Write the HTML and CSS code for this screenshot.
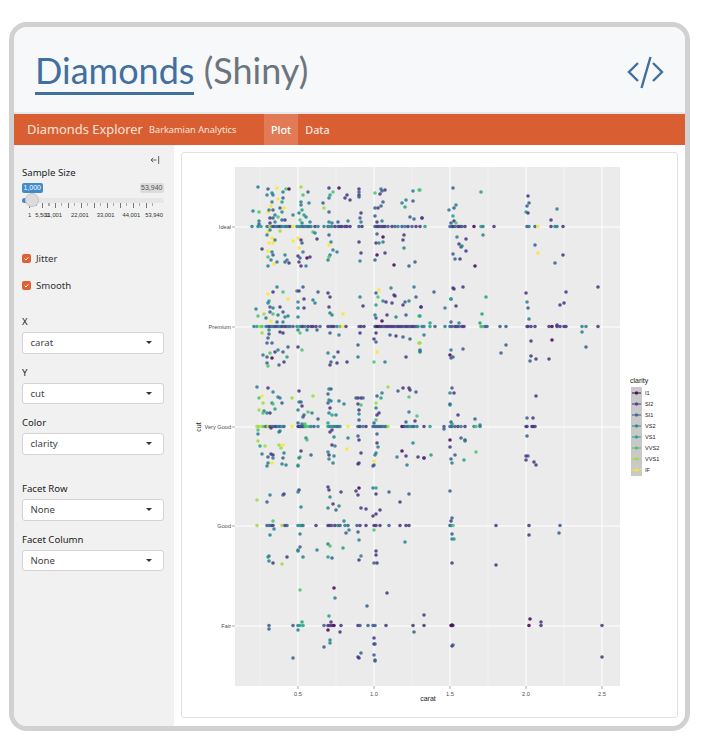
FILE: index.html
```html
<!DOCTYPE html>
<html lang="en">
<head>
<meta charset="utf-8">
<title>Diamonds (Shiny)</title>
<link rel="stylesheet" href="styles.css">
</head>
<body>

<div class="frame">
	<header class="top">
		<h1 class="title"><a href="#">Diamonds</a> <span>(Shiny)</span></h1>
		<svg class="code-icon" width="37" height="34" viewBox="627 55 37 34">
			<path d="M638 63 L629 72 L638 81 M653 63 L662 72 L653 81 M650.5 57 L641.5 88"/>
		</svg>
	</header>

	<nav class="navbar">
		<span class="brand">Diamonds Explorer</span>
		<span class="brand-sub">Barkamian Analytics</span>
		<a class="tab active" href="#">Plot</a>
		<a class="tab" href="#">Data</a>
	</nav>

	<div class="body">
		<aside class="sidebar">
			<div class="collapse">
				<svg width="10" height="10" viewBox="0 0 10 10">
					<path d="M6.5 5 H1 M3.2 2.8 L1 5 L3.2 7.2 M8.7 1 V9"/>
				</svg>
			</div>

			<label class="field-label">Sample Size</label>
			<div class="slider">
				<div class="slider-ends"><span class="from">1,000</span><span class="to">53,940</span></div>
				<div class="track"><i class="bar"></i><i class="handle"></i></div>
				<div class="ticks"></div>
				<div class="tick-labels">
					<span class="n1">1</span>
					<span class="n2">5,501</span>
					<span class="n3">11,001</span>
					<span class="n4">22,001</span>
					<span>33,001</span>
					<span>44,001</span>
					<span class="n7">53,940</span>
				</div>
			</div>

			<div class="check first"><i class="box"><svg width="9" height="9" viewBox="0 0 9 9"><path d="M2.6 4.6 L4 6 L6.5 3.2"/></svg></i>Jitter</div>
			<div class="check"><i class="box"><svg width="9" height="9" viewBox="0 0 9 9"><path d="M2.6 4.6 L4 6 L6.5 3.2"/></svg></i>Smooth</div>

			<div class="group gap-x">
				<label class="field-label">X</label>
				<div class="select">carat</div>
			</div>
			<div class="group">
				<label class="field-label">Y</label>
				<div class="select">cut</div>
			</div>
			<div class="group">
				<label class="field-label">Color</label>
				<div class="select">clarity</div>
			</div>
			<div class="group gap-facet">
				<label class="field-label">Facet Row</label>
				<div class="select">None</div>
			</div>
			<div class="group">
				<label class="field-label">Facet Column</label>
				<div class="select">None</div>
			</div>
		</aside>

		<main class="main">
			<div class="card">
				<!-- viewBox is in window pixels, easier to read the dots off the picture -->
				<svg id="plot" width="495" height="564" viewBox="182 153 495 564">
					<rect class="panel" x="235" y="167" width="385" height="519"/>
					<g id="grid"></g>
					<g id="dots"></g>

					<text class="tick-y" x="231" y="229">Ideal</text>
					<text class="tick-y" x="231" y="329">Premium</text>
					<text class="tick-y" x="231" y="429">Very Good</text>
					<text class="tick-y" x="231" y="528">Good</text>
					<text class="tick-y" x="231" y="628">Fair</text>
					<text class="axis-title" transform="translate(201 427) rotate(-90)">cut</text>

					<text class="tick-x" x="298" y="696">0.5</text>
					<text class="tick-x" x="374" y="696">1.0</text>
					<text class="tick-x" x="450" y="696">1.5</text>
					<text class="tick-x" x="526" y="696">2.0</text>
					<text class="tick-x" x="602" y="696">2.5</text>
					<text class="axis-title" x="428" y="701">carat</text>

					<text class="legend-title" x="630" y="383">clarity</text>
					<rect class="legend-keys" x="631" y="387" width="11" height="89"/>
					<g id="legend"></g>
					<text class="legend-text" x="645" y="395">I1</text>
					<text class="legend-text" x="645" y="406">SI2</text>
					<text class="legend-text" x="645" y="417">SI1</text>
					<text class="legend-text" x="645" y="428">VS2</text>
					<text class="legend-text" x="645" y="439">VS1</text>
					<text class="legend-text" x="645" y="450">VVS2</text>
					<text class="legend-text" x="645" y="461">VVS1</text>
					<text class="legend-text" x="645" y="472">IF</text>
				</svg>
			</div>
		</main>
	</div>
</div>

<script src="plot.js"></script>
</body>
</html>
```

FILE: styles.css
```css
html, body {
	margin: 0;
	padding: 0;
	background: #fff;
}

body {
	font-family: "Noto Sans", "Open Sans", sans-serif;
	color: #333;
}

a { text-decoration: none; }

.frame {
	box-sizing: border-box;
	width: 681px;
	height: 709px;
	margin: 22px 0 0 9px;
	border: 5px solid #d1d1d1;
	border-radius: 18px;
	overflow: hidden;
	display: flex;
	flex-direction: column;
	background: #fff;
}

/* top title band */
.top {
	flex: none;
	box-sizing: border-box;
	height: 87px;
	padding: 0 21px 0 21px;
	display: flex;
	align-items: flex-start;
	justify-content: space-between;
	background: #f7f8fa;
	border-bottom: 2px solid #e6e8eb;
}

.title {
	margin: 21px 0 0 0;
	font-family: Lato, sans-serif;
	font-size: 36px;
	font-weight: 400;
	line-height: 44px;
	color: #6c757d;
}

.title a {
	display: inline-block;
	color: #41709f;
	border-bottom: 3px solid #41709f;
}

.code-icon {
	margin-top: 28px;
}

.code-icon path {
	fill: none;
	stroke: #41709f;
	stroke-width: 2.4;
}

/* orange nav */
.navbar {
	flex: none;
	box-sizing: border-box;
	height: 31px;
	padding-left: 13px;
	display: flex;
	align-items: center;
	background: #d95f33;
	color: #f7e3db;
}

.brand {
	font-size: 12.9px;
	width: 122px;
	margin-bottom: 2px;
}

.brand-sub {
	font-size: 9.2px;
	width: 115px;
}

.tab {
	align-self: stretch;
	display: flex;
	align-items: center;
	padding: 0 7px 1px;
	font-size: 10.8px;
	font-weight: 500;
	color: #f7e3db;
}

.tab.active {
	background: #e17a55;
	color: #fff;
}

.body {
	flex: 1;
	display: flex;
	min-height: 0;
}

/* sidebar */
.sidebar {
	flex: none;
	box-sizing: border-box;
	width: 160px;
	padding: 10px 10px 0 8px;
	background: #f1f1f1;
	font-size: 9.6px;
}

.collapse {
	height: 10px;
	padding-right: 4px;
	display: flex;
	justify-content: flex-end;
}

.collapse path {
	fill: none;
	stroke: #555;
	stroke-width: 0.9;
}

.field-label {
	display: block;
	height: 14px;
	line-height: 14px;
	color: #222;
}

.sidebar > .field-label {
	margin-top: 1px;
}

.slider {
	margin-top: 3px;
	overflow: hidden;
	padding-top: 5px;
	margin-top: -2px;
}

.slider-ends {
	display: flex;
	justify-content: space-between;
	height: 10px;
	font-family: "Liberation Sans", sans-serif;
	font-size: 7px;
	line-height: 10px;
}

.slider-ends span {
	padding: 0 1.5px;
	border-radius: 2px;
}

.from {
	background: #428bca;
	color: #fff;
}

.to {
	background: #dcdcdc;
	color: #555;
}

.track {
	position: relative;
	height: 5px;
	margin-top: 5px;
	background: #e6e6e6;
	border-radius: 3px;
}

.bar {
	position: absolute;
	left: 0;
	top: 0;
	width: 10px;
	height: 5px;
	background: #428bca;
	border-radius: 3px 0 0 3px;
}

.handle {
	position: absolute;
	left: 3px;
	top: -5px;
	width: 14px;
	height: 14px;
	box-sizing: border-box;
	border: 1px solid #c4c4c4;
	border-radius: 50%;
	background: #dcdcdc;
}

.ticks {
	height: 5px;
	margin: 0 6px 0 7px;
	background-image:
		repeating-linear-gradient(90deg, #777 0 1px, transparent 1px 13px),
		repeating-linear-gradient(90deg, #aaa 0 1px, transparent 1px 6.5px);
	background-size: 100% 5px, 100% 3px;
	background-repeat: no-repeat;
}

.tick-labels {
	display: flex;
	margin-top: 3px;
	height: 9px;
	font-family: "Liberation Sans", sans-serif;
	font-size: 5.8px;
	line-height: 9px;
	color: #333;
	white-space: nowrap;
}

.tick-labels span {
	flex: none;
	margin-left: 8px;
}

.tick-labels .n1 { margin-left: 6px; }
.tick-labels .n2 { margin-left: 4px; }
.tick-labels .n3 { margin-left: -5px; }
.tick-labels .n4 { margin-left: 9px; }
.tick-labels .n7 { margin-left: 5px; }

.check {
	display: flex;
	align-items: center;
	height: 14px;
	margin-top: 13px;
	color: #333;
}

.check.first {
	margin-top: 31px;
}

.box {
	display: block;
	width: 9px;
	height: 9px;
	margin-right: 5px;
	border-radius: 2px;
	background: #e06234;
}

.box svg { display: block; }

.box path {
	fill: none;
	stroke: #fff;
	stroke-width: 1;
}

.group {
	margin-top: 12px;
}

.group.gap-x { margin-top: 23px; }
.group.gap-facet { margin-top: 27.5px; }

.group .field-label {
	margin-bottom: 3px;
}

.select {
	position: relative;
	box-sizing: border-box;
	height: 21.5px;
	padding-left: 7.5px;
	background: #fff;
	border: 1px solid #d4d4d4;
	border-radius: 3px;
	font-size: 9.6px;
	line-height: 19.5px;
	color: #444;
}

.select::after {
	content: "";
	position: absolute;
	right: 11px;
	top: 8px;
	border: 3px solid transparent;
	border-top: 3.5px solid #333;
	border-bottom: 0;
}

/* plot area */
.main {
	flex: 1;
	box-sizing: border-box;
	padding: 7px 7px 8px 7px;
	background: #fff;
}

.card {
	box-sizing: border-box;
	height: 100%;
	border: 1px solid #e2e2e2;
	border-radius: 3px;
	overflow: hidden;
}

#plot {
	display: block;
	font-family: "Liberation Sans", sans-serif;
}

.panel { fill: #ebebeb; }

.tick-y {
	font-size: 5.6px;
	fill: #4d4d4d;
	text-anchor: end;
}

.tick-x {
	font-size: 5.6px;
	fill: #4d4d4d;
	text-anchor: middle;
}

.axis-title {
	font-size: 7px;
	fill: #222;
	text-anchor: middle;
}

.legend-title {
	font-size: 7px;
	fill: #222;
}

.legend-text {
	font-size: 5.6px;
	fill: #222;
}

.legend-keys { fill: #c9c9c9; }
```

FILE: plot.js
```js
var NS = "http://www.w3.org/2000/svg";
var COLORS = ["#440154", "#46337e", "#365c8d", "#277f8e", "#1fa187", "#4ac16d", "#a0da39", "#fde725"];

function el(parent, name, attrs) {
	var node = document.createElementNS(NS, name);
	for (var k in attrs) node.setAttribute(k, attrs[k]);
	parent.appendChild(node);
	return node;
}

/* dots sitting on the row line, "x/colour" */
var rows = {
	227: "252/3 258/3 261/4 267/3 269/2 270/7 272/3 274/1 276/3 278/2 280/1 282/3 284/4 286/2 288/3 290/1 293/7 297/3 299/4 301/3 303/2 305/3 307/3 309/2 311/3 315/1 318/3 324/3 328/2 330/4 332/3 335/1 338/2 340/1 342/1 345/1 347/1 350/1 359/2 362/1 375/2 377/1 379/1 381/2 383/1 385/1 388/2 392/1 395/2 398/3 402/2 405/3 408/1 412/2 416/1 420/1 425/4 450/2 452/3 453/1 455/2 458/1 460/1 462/2 465/1 474/0 481/4 483/3 494/1 527/2 529/3 535/2 538/7 551/1 555/3 557/3 563/1",
	327: "254/3 257/4 260/6 262/5 266/3 268/2 270/1 272/3 274/2 276/1 278/2 280/3 282/1 284/2 286/1 288/3 290/2 293/2 297/3 299/5 301/2 303/1 305/3 308/1 311/1 313/1 316/1 320/2 328/1 330/2 332/1 334/1 337/3 340/5 343/7 346/1 359/2 361/1 364/1 375/3 376/1 378/0 380/1 382/1 384/2 386/1 388/1 390/1 392/1 394/1 396/2 398/1 400/1 402/1 404/2 406/1 408/1 410/2 412/1 414/1 416/2 418/3 422/3 424/3 430/4 435/2 445/3 450/2 452/2 455/1 457/1 459/2 462/1 464/1 481/5 482/5 485/2 487/2 500/2 506/2 527/2 528/1 531/1 535/1 549/1 552/0 557/1 560/1 564/1 566/1 582/3 586/3 598/1",
	427: "257/6 259/6 262/6 264/5 266/3 267/2 268/7 270/1 272/3 274/2 276/1 278/3 280/2 282/4 284/2 292/7 298/2 299/1 300/1 301/3 302/1 303/2 304/1 305/5 307/5 309/5 311/3 314/2 318/3 328/4 330/3 332/4 334/3 336/3 338/2 340/3 348/7 358/2 360/1 363/3 366/1 373/2 375/2 376/3 378/2 380/2 382/2 384/3 386/2 388/6 402/0 404/1 406/3 408/2 410/4 412/3 414/2 417/3 424/1 430/4 444/2 450/2 452/2 455/2 458/1 461/3 465/1 474/3 476/5 480/3 526/2 527/1 532/1 533/1 535/1",
	526: "257/6 267/2 269/3 271/2 273/1 282/6 285/1 287/2 298/3 300/4 302/3 303/3 316/1 328/1 330/1 332/2 335/1 338/3 340/2 345/3 348/2 357/2 360/1 366/1 374/1 376/1 380/1 389/2 400/1 406/1 409/1 450/2 451/3 453/5 496/1 529/1 560/2",
	626: "269/2 293/2 298/3 300/4 303/4 324/2 328/1 330/1 332/1 334/0 341/1 358/1 360/2 368/2 373/2 375/2 386/1 413/1 424/1 451/0 452/1 453/2 529/0 541/1 602/1"
};

/* everything the jitter pushed off the line, "x/y/colour" */
var jitter = "258/187/3 277/188/7 268/189/2 286/189/5 283/192/3 289/189/0 301/187/6 308/192/2 303/195/5 272/193/3 273/195/3 267/195/3 278/199/7 282/202/4 272/202/3 283/198/2 309/203/3 301/202/3 329/188/1 339/188/0 333/192/5 330/195/4 329/198/3 323/203/2 350/200/1 347/195/1 345/198/1 359/189/1 359/192/2 359/195/1 359/197/2 375/193/5 381/189/3 382/191/2 385/190/1 380/194/1 383/202/2 381/206/2 378/208/1 375/208/2 413/191/3 419/190/5 413/201/2 406/200/3 402/203/3 405/207/4 " +
	"253/211/3 259/212/5 268/212/7 271/206/7 269/210/3 273/210/2 280/208/2 284/208/7 282/212/3 275/215/3 278/217/5 270/218/1 273/218/2 259/221/3 259/224/2 270/223/1 275/222/3 282/220/2 285/220/1 293/215/3 301/205/3 302/210/4 299/213/3 304/215/4 300/220/5 302/223/3 306/217/3 310/222/3 324/208/6 329/212/2 329/222/3 332/223/3 338/222/2 348/221/3 361/213/1 360/218/2 361/222/3 375/216/2 377/222/1 382/221/3 410/217/2 414/219/2 422/218/3 " +
	"453/188/2 481/192/4 528/196/1 529/203/2 527/206/2 557/209/3 526/212/4 528/213/1 456/205/3 449/210/3 454/208/2 453/216/4 551/220/1 422/218/1 454/221/1 456/223/5 451/223/2 420/190/5 " +
	"268/232/7 270/230/3 267/235/3 272/238/7 269/243/7 273/243/7 275/240/3 280/231/6 293/241/7 262/249/1 268/251/7 272/252/3 273/255/2 268/257/5 271/260/3 268/266/3 274/264/7 277/262/3 285/255/3 287/260/3 289/263/1 285/262/2 298/238/7 301/240/1 302/243/2 299/248/7 303/252/3 310/257/1 298/256/1 300/258/2 299/262/1 301/266/1 306/266/3 307/258/0 313/232/5 317/239/1 315/233/3 329/235/2 331/242/3 329/245/7 333/250/3 330/255/3 328/260/3 329/257/5 337/252/3 359/242/1 361/253/1 360/261/3 377/234/2 376/243/1 379/243/3 383/237/0 385/253/1 377/255/0 375/260/2 383/242/3 394/265/0 403/240/1 404/235/1 404/248/3 409/266/2 415/262/2 " +
	"457/237/3 483/235/3 466/239/1 459/244/1 461/247/2 462/246/3 466/251/1 453/254/2 455/259/2 460/259/1 475/266/0 535/245/2 538/253/7 563/255/1 555/263/2 " +
	"277/287/3 283/292/5 288/299/7 297/291/3 303/287/2 299/291/1 268/294/7 273/292/1 304/299/1 313/300/3 318/292/2 328/293/1 330/297/1 315/303/3 269/301/4 268/303/3 270/307/2 273/308/3 280/307/1 270/312/2 273/314/5 278/315/3 283/312/2 285/317/3 288/316/3 264/314/6 258/316/5 256/309/3 298/302/3 298/308/3 298/317/3 304/308/1 329/307/1 330/313/3 332/315/3 343/314/7 271/321/7 277/322/2 283/322/3 266/318/3 " +
	"360/297/3 363/306/1 376/293/2 379/290/7 378/297/5 391/288/3 394/295/1 376/305/4 375/315/3 376/318/2 382/321/0 387/315/1 396/317/3 403/305/1 405/302/2 409/301/3 414/287/3 416/297/2 421/307/1 419/316/5 406/315/2 395/296/1 383/301/3 386/302/1 392/303/1 " +
	"434/292/2 453/288/1 454/289/1 463/287/1 451/299/3 451/299/4 486/297/4 421/307/1 445/308/3 456/306/1 420/316/4 482/314/4 430/323/4 451/322/2 459/323/3 480/323/4 526/293/1 527/302/3 528/308/2 529/319/3 566/292/1 598/287/1 564/303/1 560/305/1 557/325/1 " +
	"262/333/6 269/330/3 269/334/2 268/338/2 272/343/2 267/343/2 263/355/3 267/357/2 270/353/5 272/358/0 275/352/1 278/350/3 283/352/2 288/347/2 287/357/4 280/332/1 283/333/1 300/333/5 298/330/3 307/330/3 317/330/2 302/350/5 298/347/1 330/333/2 328/353/3 334/357/3 338/352/1 339/335/3 358/345/2 360/333/1 358/357/3 376/333/1 374/339/1 376/342/2 377/352/7 390/335/2 396/336/1 403/337/2 410/339/2 419/343/6 420/350/3 420/352/3 406/357/1 " +
	"424/335/3 582/332/3 586/347/2 531/341/1 552/340/0 506/345/2 501/353/2 463/349/2 451/350/3 450/355/0 453/357/2 451/358/2 420/351/3 420/343/6 531/356/1 536/359/1 549/359/1 " +
	"267/363/2 268/366/5 279/365/2 284/362/1 330/365/1 337/363/1 331/362/2 347/362/1 374/362/5 385/362/3 530/361/2 " +
	"257/387/3 268/388/1 262/396/7 259/398/5 273/392/3 278/397/3 280/398/3 272/403/3 273/404/5 282/403/2 292/398/6 263/403/6 259/410/6 264/411/3 263/413/5 267/413/3 275/409/4 270/413/1 299/391/1 313/396/6 299/402/3 301/402/2 302/406/1 298/410/3 308/412/5 312/413/3 304/415/2 303/417/2 318/419/2 298/423/2 305/424/5 302/424/3 329/389/3 331/389/2 328/394/2 329/400/3 331/401/3 328/403/2 330/408/1 329/413/3 332/415/4 336/415/3 339/401/3 344/404/3 328/423/4 " +
	"358/398/1 361/398/1 363/398/2 356/398/2 358/404/1 361/405/5 359/410/1 359/414/3 359/420/2 377/396/2 382/393/3 381/398/4 388/387/6 376/403/6 376/408/3 379/413/1 377/415/1 376/420/5 374/423/2 398/391/2 403/388/1 409/388/1 410/390/1 416/392/2 409/397/5 409/412/3 417/416/5 406/422/2 415/421/1 " +
	"452/388/2 450/393/3 454/393/1 450/404/2 450/405/3 458/415/1 475/419/2 451/422/2 452/424/4 536/396/1 533/418/1 527/418/2 " +
	"258/430/5 258/434/3 271/428/1 280/431/3 279/432/3 258/441/6 260/446/4 265/446/6 279/445/6 283/445/7 281/448/6 284/453/3 283/458/2 262/454/3 268/457/2 271/454/1 273/455/1 273/458/3 272/463/7 268/463/3 267/466/3 282/464/3 286/465/3 306/438/3 307/440/5 301/451/1 300/457/5 299/458/3 311/455/2 298/465/5 298/466/3 330/432/1 332/430/1 334/437/3 332/445/1 335/446/3 348/438/3 347/449/7 328/452/3 329/455/1 334/456/3 329/459/3 333/463/3 " +
	"358/436/2 359/440/1 361/453/1 359/463/1 358/464/1 377/434/2 377/443/1 378/447/3 376/453/3 375/455/3 374/461/7 374/465/2 373/466/2 397/457/3 406/456/1 413/443/3 402/451/0 418/457/1 424/458/1 407/465/3 431/455/4 " +
	"444/429/2 480/425/3 461/438/2 465/440/1 465/441/3 450/440/0 450/447/1 476/452/5 424/458/1 455/455/2 451/459/2 452/463/3 464/460/4 527/436/2 528/456/2 526/456/1 526/460/1 534/462/1 536/465/1 " +
	"257/500/6 267/502/2 270/495/3 284/494/1 283/495/2 299/490/1 298/492/3 301/507/3 328/487/1 329/490/1 330/497/3 328/508/3 333/504/1 339/506/3 336/510/2 341/492/1 359/488/0 356/491/1 358/495/1 373/488/3 376/488/4 376/494/1 389/492/2 361/508/1 366/509/1 409/494/2 400/502/1 380/510/1 376/514/1 373/516/1 273/521/5 344/521/3 450/491/2 452/518/2 451/521/1 " +
	"270/535/3 274/529/3 300/534/3 346/533/2 349/530/3 358/532/2 359/540/3 374/530/5 405/542/3 298/551/3 300/547/2 328/544/3 330/546/5 343/548/4 317/550/3 376/551/1 452/534/2 452/539/3 454/539/4 529/535/1 559/533/2 " +
	"268/557/4 269/556/3 269/561/3 273/563/1 282/564/6 287/557/1 303/557/3 298/550/3 328/557/4 332/558/2 359/560/1 361/556/3 374/563/2 377/563/1 376/555/1 452/563/1 496/565/1 " +
	"334/588/0 300/590/5 335/598/3 387/593/1 367/606/2 329/616/4 331/622/1 302/622/4 424/615/1 530/619/0 541/622/1 452/625/0 " +
	"269/629/2 298/630/3 328/630/0 340/632/1 414/632/2 330/640/3 330/643/3 374/638/1 374/644/1 375/644/2 324/647/2 293/658/2 361/653/2 358/657/1 359/658/1 374/655/2 375/660/2 375/661/2 452/646/1 453/645/2 602/657/1";

var grid = document.getElementById("grid");
var dots = document.getElementById("dots");
var legend = document.getElementById("legend");
var i;

/* minor lines first, then the majors on top */
for (i = 0; i < 5; i++) {
	var mx = 260 + i * 76;
	el(grid, "line", {x1: mx, x2: mx, y1: 167, y2: 686, stroke: "#f4f4f4", "stroke-width": 0.5});
}
el(grid, "line", {x1: 564, x2: 564, y1: 167, y2: 686, stroke: "#f4f4f4", "stroke-width": 0.5});
for (i = 0; i < 5; i++) {
	var gx = 298 + i * 76;
	el(grid, "line", {x1: gx, x2: gx, y1: 167, y2: 686, stroke: "#fff", "stroke-width": 1});
}
Object.keys(rows).forEach(function(y) {
	el(grid, "line", {x1: 235, x2: 620, y1: y, y2: y, stroke: "#fff", "stroke-width": 1});
	el(grid, "line", {x1: 232, x2: 235, y1: y, y2: y, stroke: "#555", "stroke-width": 0.5});
});
for (i = 0; i < 5; i++) {
	var tx = 298 + i * 76;
	el(grid, "line", {x1: tx, x2: tx, y1: 686, y2: 689, stroke: "#555", "stroke-width": 0.5});
}

function dot(x, y, c) {
	el(dots, "circle", {cx: x, cy: y, r: 1.8, fill: COLORS[c], "fill-opacity": 0.85});
}

Object.keys(rows).forEach(function(y) {
	rows[y].split(" ").forEach(function(p) {
		var v = p.split("/");
		dot(+v[0], +y - 0.5, +v[1]);
	});
});

jitter.trim().split(" ").forEach(function(p) {
	var v = p.split("/");
	dot(+v[0], +v[1], +v[2]);
});

/* legend keys */
COLORS.forEach(function(c, n) {
	var y = 393 + n * 11;
	el(legend, "line", {x1: 632, x2: 641, y1: y, y2: y, stroke: c, "stroke-width": 1});
	el(legend, "circle", {cx: 636.5, cy: y, r: 1.7, fill: c, "fill-opacity": 0.8});
});
```
